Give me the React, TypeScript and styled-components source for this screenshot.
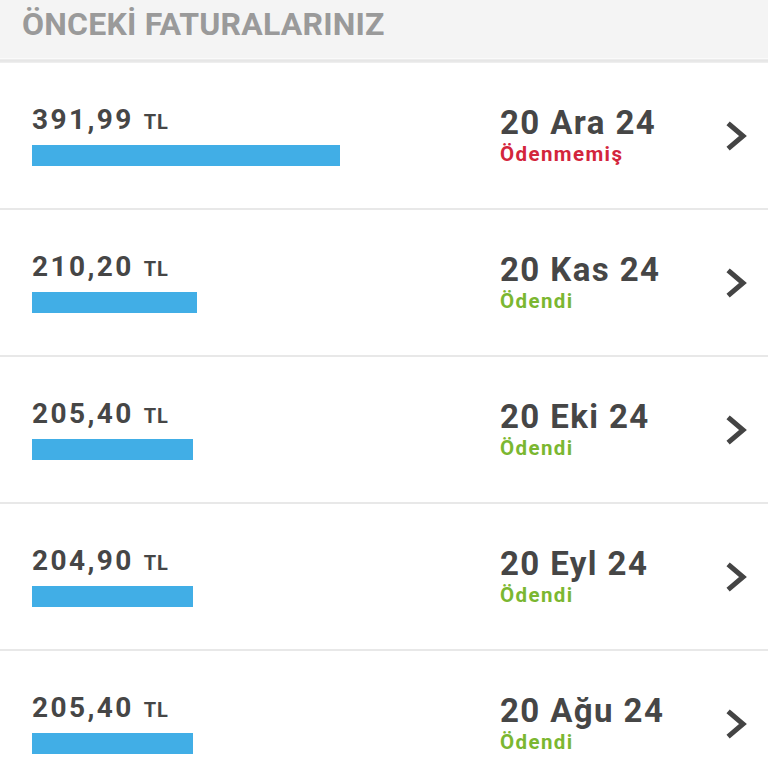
import React from "react";
import styled, { createGlobalStyle } from "styled-components";

const Global = createGlobalStyle`
  html, body { margin: 0; padding: 0; background: #ffffff; }
  body { font-family: Roboto, "Noto Sans", sans-serif; }
`;

const Page = styled.div`
  width: 768px;
  height: 768px;
  overflow: hidden;
  background: #ffffff;
`;

const Header = styled.div`
  height: 58px;
  background: #f4f4f4;
  border-bottom: 1px solid #fafafa;
  box-shadow: 0 1px 0 #ececec, 0 2px 0 #e6e6e6, 0 3px 0 #e8e8e8, 0 4px 0 #eeeeee;
  margin-bottom: 4px;
  padding-left: 22px;
  display: flex;
  align-items: flex-start;
`;

const Title = styled.h1`
  margin: 0;
  margin-top: 5px;
  font-size: 32px;
  line-height: 38px;
  font-weight: 700;
  color: #9a9a9a;
  letter-spacing: 0.2px;
`;

const Row = styled.div`
  height: 145px;
  border-bottom: 2px solid #e8e8e8;
  display: flex;
  align-items: flex-start;
  padding-left: 32px;
`;

const Left = styled.div`
  width: 468px;
  margin-top: 41px;
  display: flex;
  flex-direction: column;
`;

const AmountLine = styled.div`
  display: flex;
  align-items: baseline;
  color: #464646;
  font-weight: 700;
`;

const Amount = styled.span`
  font-size: 28px;
  line-height: 32px;
  letter-spacing: 2.4px;
`;

const Currency = styled.span`
  font-size: 20px;
  line-height: 32px;
  margin-left: 10px;
  letter-spacing: 1px;
`;

const Bar = styled.div`
  margin-top: 7px;
  height: 21px;
  background: #41aee6;
`;

const Right = styled.div`
  width: 226px;
  margin-top: 42px;
  display: flex;
  flex-direction: column;
`;

const DateText = styled.div`
  font-size: 33px;
  line-height: 36px;
  font-weight: 700;
  color: #464646;
  letter-spacing: 1.4px;
`;

const Status = styled.div<{ $paid: boolean }>`
  margin-top: 1px;
  font-size: 20.5px;
  line-height: 24px;
  font-weight: 700;
  color: ${(p) => (p.$paid ? "#7bb731" : "#d3253c")};
  letter-spacing: 1.4px;
`;

const Chevron = styled.div`
  width: 42px;
  align-self: center;
  display: flex;
  justify-content: flex-start;
`;

type Bill = { amount: string; value: number; date: string; paid: boolean };

const bills: Bill[] = [
  { amount: "391,99", value: 391.99, date: "20 Ara 24", paid: false },
  { amount: "210,20", value: 210.2, date: "20 Kas 24", paid: true },
  { amount: "205,40", value: 205.4, date: "20 Eki 24", paid: true },
  { amount: "204,90", value: 204.9, date: "20 Eyl 24", paid: true },
  { amount: "205,40", value: 205.4, date: "20 Ağu 24", paid: true },
];

const ArrowIcon = () => (
  <svg width="24" height="30" viewBox="0 0 24 30">
    <polyline
      points="4,4 17,15 4,26"
      fill="none"
      stroke="#444444"
      strokeWidth="5"
      strokeLinecap="square"
      strokeLinejoin="miter"
    />
  </svg>
);

export default function App() {
  return (
    <Page>
      <Global />
      <Header>
        <Title>ÖNCEKİ FATURALARINIZ</Title>
      </Header>
      {bills.map((b, i) => (
        <Row key={i}>
          <Left>
            <AmountLine>
              <Amount>{b.amount}</Amount>
              <Currency>TL</Currency>
            </AmountLine>
            <Bar style={{ width: `${Math.round(b.value * 0.786)}px` }} />
          </Left>
          <Right>
            <DateText>{b.date}</DateText>
            <Status $paid={b.paid}>{b.paid ? "Ödendi" : "Ödenmemiş"}</Status>
          </Right>
          <Chevron>
            <ArrowIcon />
          </Chevron>
        </Row>
      ))}
    </Page>
  );
}
